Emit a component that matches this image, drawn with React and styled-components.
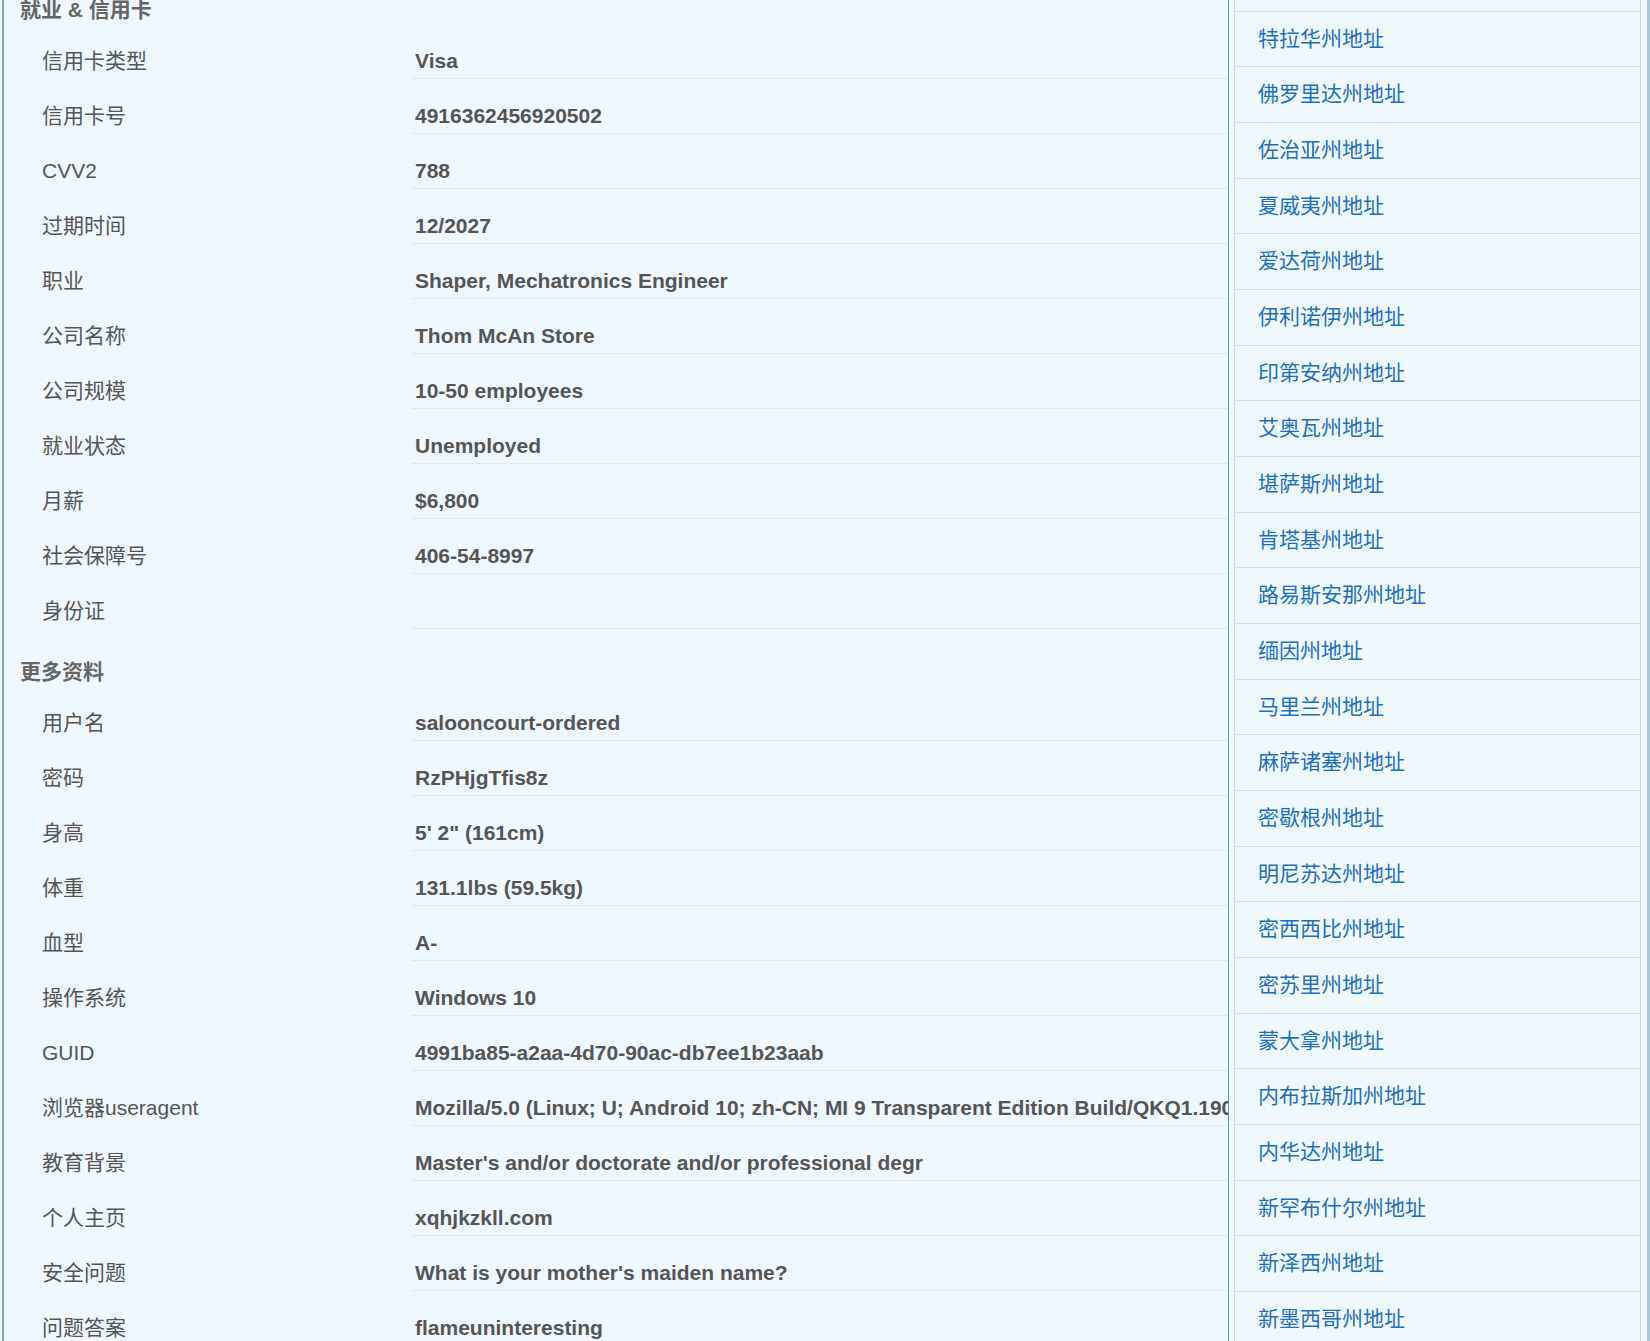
import React from "react";
import styled, { createGlobalStyle } from "styled-components";

const Global = createGlobalStyle`
  html, body { margin: 0; padding: 0; background: #f0f8ff; }
  body { font-family: "Liberation Sans", Arial, "Noto Sans CJK SC", sans-serif; }
  * { box-sizing: border-box; }
`;

const Viewport = styled.div`
  width: 1650px;
  height: 1341px;
  overflow: hidden;
  background: #f0f8ff;
`;

const Frame = styled.div`
  margin: -44px 0 0 2px;
  width: 1648px;
  border-left: 2px solid #7ea3bf;
  border-right: 3px solid #a9c5d6;
  display: flex;
  align-items: flex-start;
  gap: 5px;
  padding-right: 6px;
  background: #f0f8ff;
`;

const Main = styled.section`
  width: 1225px;
  flex: none;
  padding-top: 11px;
  border-right: 1px solid #5b93c7;
`;

const Heading = styled.h3`
  margin: 0;
  padding: 31px 0 2px 16px;
  font-size: 21px;
  line-height: 24px;
  font-weight: bold;
  color: #666;
`;

const Row = styled.div`
  display: grid;
  grid-template-columns: 370px 1fr;
  padding-left: 38px;
  font-size: 21px;
  line-height: 24px;
  color: #555;
`;

const Label = styled.div`
  padding: 25px 0 6px;
  white-space: nowrap;
`;

const Value = styled.div`
  padding: 25px 0 5px 3px;
  border-bottom: 1px solid #e2e8ed;
  font-weight: bold;
  white-space: nowrap;
  overflow: hidden;
  min-height: 55px;
`;

const Side = styled.nav`
  width: 407px;
  flex: none;
  border-left: 1px solid #cdd8e1;
  border-right: 1px solid #cdd8e1;
`;

const Item = styled.a`
  display: block;
  height: 55.68px;
  line-height: 54.68px;
  padding-left: 23px;
  border-bottom: 1px solid #d3dde6;
  font-size: 21px;
  color: #1f6fbf;
  text-decoration: none;
  white-space: nowrap;
`;

const sections = [
  {
    title: "就业 & 信用卡",
    rows: [
      ["信用卡类型", "Visa"],
      ["信用卡号", "4916362456920502"],
      ["CVV2", "788"],
      ["过期时间", "12/2027"],
      ["职业", "Shaper, Mechatronics Engineer"],
      ["公司名称", "Thom McAn Store"],
      ["公司规模", "10-50 employees"],
      ["就业状态", "Unemployed"],
      ["月薪", "$6,800"],
      ["社会保障号", "406-54-8997"],
      ["身份证", ""],
    ],
  },
  {
    title: "更多资料",
    rows: [
      ["用户名", "salooncourt-ordered"],
      ["密码", "RzPHjgTfis8z"],
      ["身高", "5' 2\" (161cm)"],
      ["体重", "131.1lbs (59.5kg)"],
      ["血型", "A-"],
      ["操作系统", "Windows 10"],
      ["GUID", "4991ba85-a2aa-4d70-90ac-db7ee1b23aab"],
      [
        "浏览器useragent",
        "Mozilla/5.0 (Linux; U; Android 10; zh-CN; MI 9 Transparent Edition Build/QKQ1.190825.002) AppleWebKit/537.36 (KHTML, like Gecko) Version/4.0 Chrome/78.0.3904.108 Mobile Safari/537.36",
      ],
      ["教育背景", "Master's and/or doctorate and/or professional degr"],
      ["个人主页", "xqhjkzkll.com"],
      ["安全问题", "What is your mother's maiden name?"],
      ["问题答案", "flameuninteresting"],
    ],
  },
];

const states = [
  "康涅狄格州地址",
  "特拉华州地址",
  "佛罗里达州地址",
  "佐治亚州地址",
  "夏威夷州地址",
  "爱达荷州地址",
  "伊利诺伊州地址",
  "印第安纳州地址",
  "艾奥瓦州地址",
  "堪萨斯州地址",
  "肯塔基州地址",
  "路易斯安那州地址",
  "缅因州地址",
  "马里兰州地址",
  "麻萨诸塞州地址",
  "密歇根州地址",
  "明尼苏达州地址",
  "密西西比州地址",
  "密苏里州地址",
  "蒙大拿州地址",
  "内布拉斯加州地址",
  "内华达州地址",
  "新罕布什尔州地址",
  "新泽西州地址",
  "新墨西哥州地址",
  "纽约州地址",
  "北卡罗来纳州地址",
];

export default function App() {
  return (
    <Viewport>
      <Global />
      <Frame>
        <Main>
          {sections.map((s) => (
            <React.Fragment key={s.title}>
              <Heading>{s.title}</Heading>
              {s.rows.map(([k, v]) => (
                <Row key={k}>
                  <Label>{k}</Label>
                  <Value>{v}</Value>
                </Row>
              ))}
            </React.Fragment>
          ))}
        </Main>
        <Side>
          {states.map((s) => (
            <Item key={s} href="#">
              {s}
            </Item>
          ))}
        </Side>
      </Frame>
    </Viewport>
  );
}
